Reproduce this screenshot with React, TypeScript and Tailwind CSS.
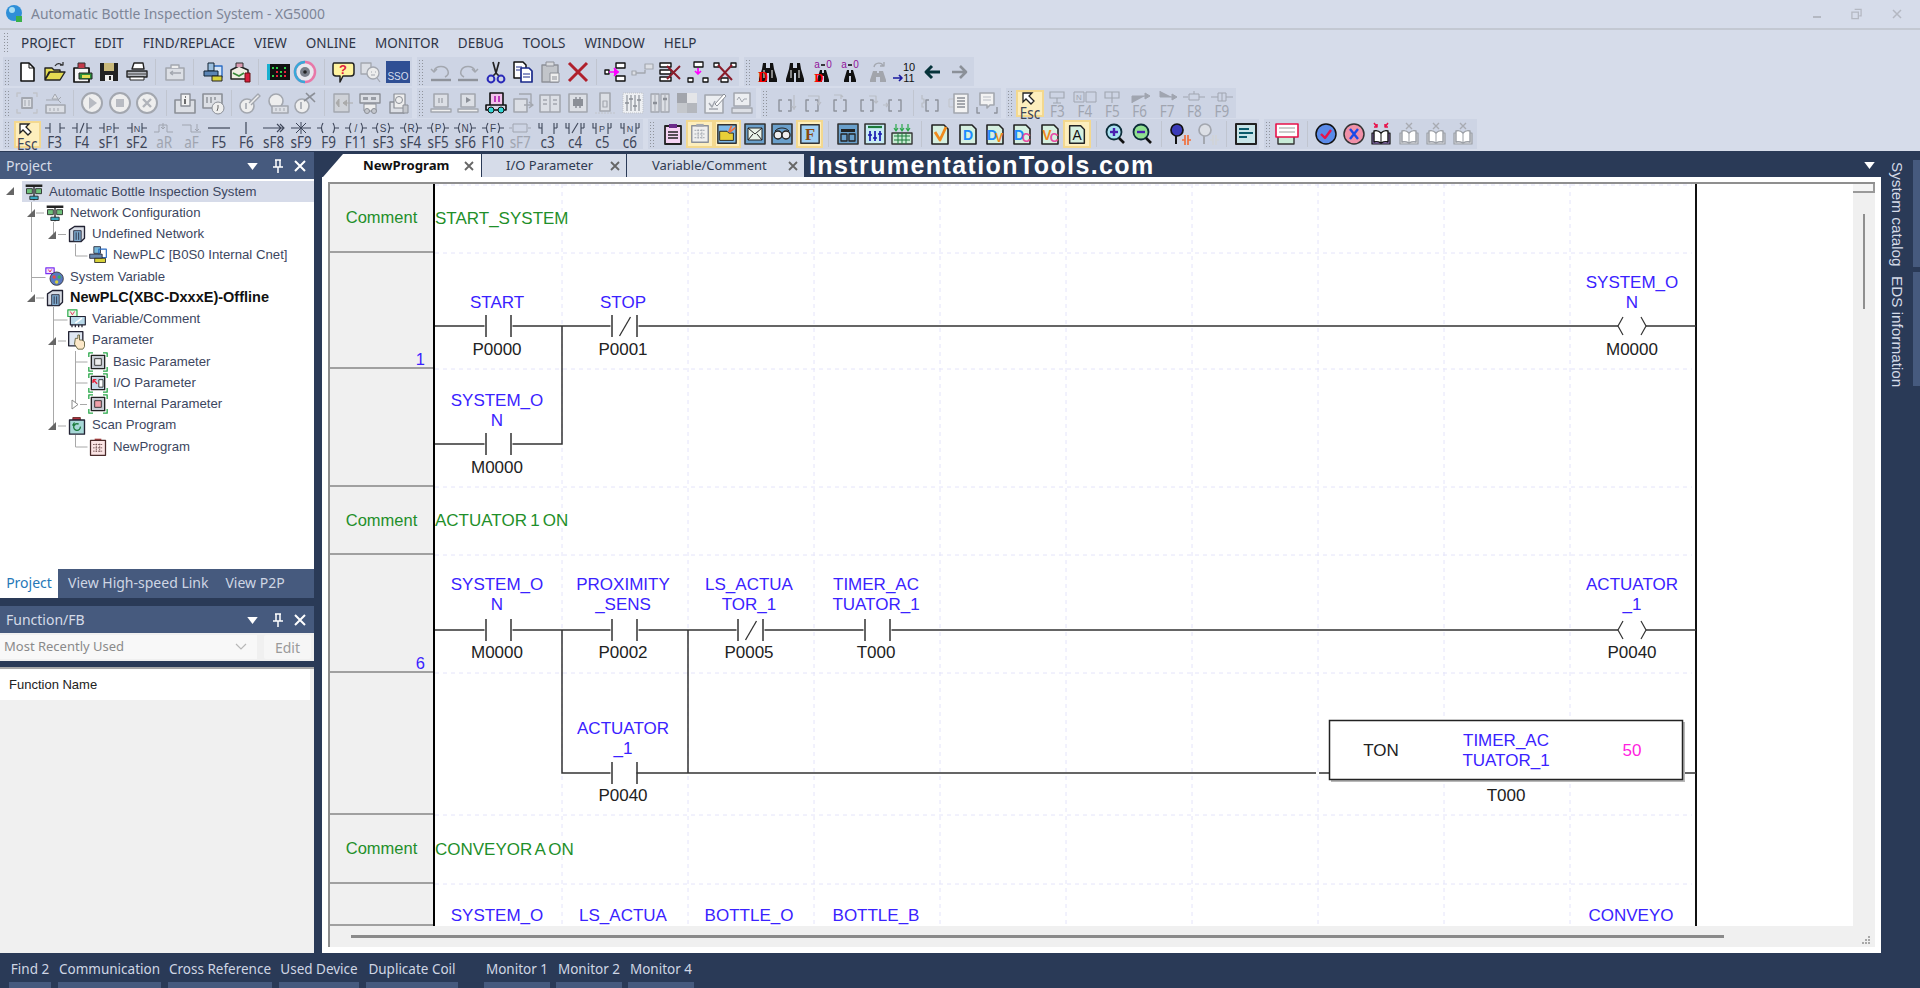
import type { ReactNode } from "react";

const DS = "#a3a7af"; // disabled stroke
const DF = "#dcdfe5"; // disabled fill

function S({ children, className = "w-[24px] h-[24px]" }: { children: ReactNode; className?: string }) {
  return (
    <svg viewBox="0 0 24 24" className={`${className} overflow-visible`} fill="none" strokeLinejoin="round">
      {children}
    </svg>
  );
}

function Doc({ a, b, c1 = "#1a8cff", c2 = "#f08a1c" }: { a: string; b?: string; c1?: string; c2?: string }) {
  return (
    <>
      <path d="M4 3h12l4 4v15H4z" fill="#d6f0e0" stroke="#222" strokeWidth="1.6" />
      <text x={b ? 9 : 12} y="18" fontSize="14" fontWeight="700" textAnchor="middle" fill={c1} fontFamily="Liberation Sans">{a}</text>
      {b && <text x="16" y="20" fontSize="12" fontWeight="700" textAnchor="middle" fill={c2} fontFamily="Liberation Sans">{b}</text>}
    </>
  );
}

function Book({ on = false }: { on?: boolean }) {
  const s = on ? "#111" : "#9b9fa6";
  return (
    <>
      <path d="M3 11h18v11H3z" fill={on ? "#a884d8" : "#d8dade"} stroke={s} strokeWidth="1.2" />
      <path d="M5 9c3-1 5 0 7 2 2-2 4-3 7-2v11c-3-1-5 0-7 1-2-1-4-2-7-1z" fill="#fff" stroke={s} strokeWidth="1.4" />
      <path d="M12 11v9" stroke={s} />
      {on ? (
        <path d="M5 1l3 4M8 2v3H5M19 1l-3 4M16 2v3h3" stroke="#e8124a" strokeWidth="1.5" />
      ) : (
        <path d="M9 1l6 6M15 1L9 7" stroke="#a8abb2" strokeWidth="1.4" />
      )}
    </>
  );
}

function Mag({ c, plus }: { c: string; plus?: boolean }) {
  return (
    <>
      <circle cx="11" cy="10" r="7.5" fill={c} stroke="#0d2d3a" strokeWidth="1.8" />
      <path d="M7 10h8" stroke="#4a1fb0" strokeWidth="2.4" />
      {plus && <path d="M11 6v8" stroke="#4a1fb0" strokeWidth="2.4" />}
      <path d="M16 16l5 5" stroke="#111" strokeWidth="2.6" />
    </>
  );
}

function Bino({ d }: { d?: boolean }) {
  return (
    <>
      <path d="M7 3h3v5h4V3h3l1 6 3 10v3h-8v-9h-2v9H3v-3l3-10z" fill="#111" />
      <path d="M8 10v8M16 10v8" stroke="#fff" strokeWidth="1" />
      {d && <text x="7" y="22" fontSize="14" fontWeight="900" textAnchor="middle" fill="#f00" fontFamily="Liberation Serif">D</text>}
    </>
  );
}

function SmallBino({ d }: { d?: boolean }) {
  return (
    <>
      <path d="M9 10h2v3h2v-3h2l3 10v2h-5v-6h-2v6H6v-2z" fill="#111" />
      <text x="6" y="8" fontSize="10" textAnchor="middle" fill="#90129a" fontFamily="Liberation Sans">a</text>
      <path d="M10 5h4" stroke="#111" strokeWidth="1.6" />
      <text x="18" y="8" fontSize="10" textAnchor="middle" fill="#90129a" fontFamily="Liberation Sans">0</text>
      {d && <text x="8" y="22" fontSize="13" fontWeight="900" textAnchor="middle" fill="#f00" fontFamily="Liberation Serif">D</text>}
    </>
  );
}

function Bracket({ d }: { d: string }) {
  return (
    <>
      <path d="M9 9H6v11h3M15 9h3v11h-3" stroke="#8e939c" strokeWidth="1.4" />
      <path d={d} stroke="#b9bdc5" strokeWidth="1.2" />
    </>
  );
}

const icons: Record<string, ReactNode> = {
  new: <><path d="M6 3h8l5 5v13H6z" fill="#fff" stroke="#111" strokeWidth="1.6" /><path d="M14 3v5h5" stroke="#111" /></>,
  open: <><path d="M2 20V8h7l2 2h6v2H7l-5 8 4-8h16l-5 8z" fill="#e4dc52" stroke="#222" strokeWidth="1.4" /><path d="M12 6c2-3 5-3 7-1M20 2v3h-3" stroke="#333" strokeWidth="1.3" /></>,
  openPlc: <><path d="M4 8h15v14H4z" fill="#f6f6f6" stroke="#111" strokeWidth="1.7" /><path d="M8 8V3h7v5" fill="#c23a4a" stroke="#333" /><path d="M9 13h13v6H9z" fill="#2f8f3a" stroke="#222" /><path d="M12 15h8v3h-8z" fill="#e4dc52" /></>,
  save: <><path d="M3 3h18v18H3z" fill="#222" /><path d="M7 3h10v8H7z" fill="#c9b97a" /><path d="M8 15h8v6H8z" fill="#eee" /><path d="M12 16h2v4h-2z" fill="#222" /></>,
  print: <><path d="M7 9l2-6h9l1 6z" fill="#fff" stroke="#222" strokeWidth="1.4" /><path d="M2 11h20v6H2z" fill="#b5b8bf" stroke="#222" strokeWidth="1.4" /><path d="M5 17h14v3H5z" fill="#fff" stroke="#222" /><path d="M3 14h18" stroke="#444" /></>,
  clip: <><path d="M3 8h18v12H3z" fill={DF} stroke={DS} strokeWidth="1.6" /><path d="M8 8V5h8v3" stroke={DS} strokeWidth="1.4" fill="#eee" /><path d="M7 13h11M7 13l3-2M7 13l3 2" stroke={DS} strokeWidth="1.4" /></>,
  plc: <><path d="M12 6h9v11h-9z" fill="#d6e6f8" stroke="#2b6cc4" strokeWidth="1.4" /><path d="M7 3h6v8H7z" fill="#9cc0e0" stroke="#123" /><path d="M3 11h14v5H3z" fill="#5b85b5" stroke="#123" /><path d="M11 16h10v5H11z" fill="#d8d23a" stroke="#222" /></>,
  plcChk: <><path d="M3 10l8-4 9 4v9H3z" fill="#f0eee4" stroke="#222" strokeWidth="1.5" /><path d="M8 7V3h7v4" fill="#d99ab0" stroke="#333" /><path d="M5 13l6 3 5-3" stroke="#3a8a3a" strokeWidth="1.8" /><path d="M17 13h5v9h-5z" fill="#d81c3c" stroke="#611" /></>,
  led: <><path d="M1 4h23v16H1z" fill="#111" /><path d="M1 4h3v16H1z" fill="#18b0d0" /><path d="M6 7h2v2H6zM10 7h2v2h-2zM14 11h2v2h-2zM18 7h2v2h-2zM6 15h2v2H6zM14 15h2v2h-2z" fill="#2fd04a" /><path d="M10 11h2v2h-2zM18 11h2v2h-2zM10 15h2v2h-2zM18 15h2v2h-2z" fill="#e8243c" /></>,
  ring: <><circle cx="12" cy="12" r="10" fill="#e8e8ee" stroke="#e878a8" strokeWidth="2.5" /><path d="M12 2a10 10 0 0 0 0 20" stroke="#38a8d8" strokeWidth="2.5" /><circle cx="12" cy="12" r="5" fill="#7a7f8a" /><circle cx="12" cy="12" r="1.8" fill="#222" /></>,
  help: <><path d="M3 3h18q2 0 2 3v7q0 3-3 3h-8l-3 6v-6H5q-3 0-3-3V6q0-3 1-3z" fill="#fff3a0" stroke="#222" strokeWidth="1.5" /><text x="12" y="14" fontSize="13" fontWeight="700" textAnchor="middle" fill="#e0203c" fontFamily="Liberation Sans">?</text></>,
  faces: <><path d="M3 3h10v11H3z" fill={DF} stroke={DS} strokeWidth="1.3" /><circle cx="15" cy="13" r="6" fill="#ededed" stroke={DS} strokeWidth="1.3" /><path d="M13 12h1M17 12h1M13 15h4M19 18l3 4" stroke={DS} strokeWidth="1.2" /></>,
  sso: <><path d="M0 1h24v22H0z" fill="#2f4f94" /><text x="12" y="20" fontSize="10" textAnchor="middle" fill="#d4dcec" fontFamily="Liberation Sans">SSO</text></>,
  undo: <><path d="M5 11c2-6 12-6 14 0 1 3-1 5-3 6" stroke={DS} strokeWidth="1.5" /><path d="M2 9l3 3 3-3" stroke={DS} strokeWidth="1.5" /><path d="M2 20h20" stroke="#8f939b" strokeWidth="2.4" /></>,
  redo: <><path d="M19 11C17 5 7 5 5 11c-1 3 1 5 3 6" stroke={DS} strokeWidth="1.5" /><path d="M16 9l3 3 3-3" stroke={DS} strokeWidth="1.5" /><path d="M2 20h20" stroke="#8f939b" strokeWidth="2.4" /></>,
  cut: <><path d="M9 2l3 11 3-11M12 13l-3 3M12 13l3 3" stroke="#222" strokeWidth="1.7" /><circle cx="7" cy="19" r="3.4" stroke="#2a2ab8" strokeWidth="2" /><circle cx="17" cy="19" r="3.4" stroke="#2a2ab8" strokeWidth="2" /></>,
  copy: <><path d="M3 2h9l3 3v13H3z" fill="#fff" stroke="#111" strokeWidth="1.5" /><path d="M10 8h8l3 3v11H10z" fill="#fff" stroke="#1a2a8a" strokeWidth="1.7" /><path d="M12 14h7M12 17h7M5 7h6M5 10h4" stroke="#1a2a8a" /></>,
  paste: <><path d="M4 5h16v17H4z" fill="#c2c5ca" stroke="#8d9098" strokeWidth="1.4" /><path d="M8 6V2h8v4z" fill="#d8dade" stroke="#8d9098" /><path d="M12 13h9v9h-9z" fill="#eee" stroke="#8d9098" /><path d="M14 17h5M14 19h5" stroke="#8d9098" /></>,
  del: <path d="M3 3l18 18M21 3L3 21" stroke="#b0202c" strokeWidth="3" />,
  net1: <><path d="M1 10h4v4H1zM12 3h9v5h-9zM12 16h9v5h-9z" fill="#fff" stroke="#111" strokeWidth="1.4" /><path d="M5 12h10M10 8l4 4-4 4" fill="#f0f" stroke="#f0f" strokeWidth="1.6" /></>,
  net2: <><path d="M1 11h4v4H1zM14 4h8v5h-8z" fill={DF} stroke={DS} strokeWidth="1.2" /><path d="M5 13h9v-3" stroke={DS} strokeWidth="1.4" /></>,
  net3: <><path d="M2 3h11v4H2zM2 10h11v4H2zM2 17h11v4H2z" fill="#fff" stroke="#111" strokeWidth="1.4" /><path d="M9 6l13 13M22 6L9 19" stroke="#8a1c2a" strokeWidth="2" /></>,
  net4: <><path d="M8 2h9v5H8zM2 18h5v4H2zM17 18h5v4h-5z" fill="#fff" stroke="#111" strokeWidth="1.3" /><path d="M12 8v6M9 11l3 3 3-3" stroke="#f0f" strokeWidth="1.7" /></>,
  net5: <><path d="M1 3h5v4H1zM18 3h5v4h-5zM8 18h7v4H8z" fill="#fff" stroke="#111" strokeWidth="1.3" /><path d="M5 5l14 15M19 5L5 20" stroke="#8a1c2a" strokeWidth="2" /></>,
  findD1: <Bino d />,
  find1: <Bino />,
  findD2: <SmallBino d />,
  find2: <SmallBino />,
  findG: <><path d="M7 11h4v2h2v-2h4l3 9v2h-6v-5h-4v5H4v-2z" fill="#a2a5ac" /><path d="M8 7c1-5 8-5 9-1M18 2v4h-4" stroke={DS} strokeWidth="1.4" /></>,
  num: <><text x="16" y="11" fontSize="11" textAnchor="middle" fill="#111" fontFamily="Liberation Sans">10</text><text x="16" y="22" fontSize="11" textAnchor="middle" fill="#111" fontFamily="Liberation Sans">11</text><path d="M0 18h9M6 15l3 3-3 3" stroke="#1a1aa0" strokeWidth="1.7" /></>,
  back: <path d="M20 12H6M12 6l-6 6 6 6" stroke="#06333a" strokeWidth="3" />,
  fwd: <path d="M4 12h14M12 6l6 6-6 6" stroke="#8b9098" strokeWidth="2.6" />,
  // row 2
  exp: <><path d="M7 7h10v10H7z" fill={DF} stroke={DS} strokeWidth="1.8" /><path d="M10 9v6M14 9v6" stroke={DS} /><path d="M2 6V2h4M22 6V2h-4M2 18v4h4M22 18v4h-4" stroke="#c1c4ca" strokeWidth="1.4" /></>,
  dl: <><path d="M9 8l3-5 3 5z" fill={DF} stroke={DS} /><path d="M3 9h12M15 9l3-3M15 9l3 3" stroke={DS} /><path d="M3 14h19v8H3z" fill={DF} stroke={DS} strokeWidth="1.6" /><path d="M7 17v3M11 17v3M15 17v3" stroke={DS} /></>,
  play: <><circle cx="12" cy="12" r="10" fill="#eee" stroke={DS} strokeWidth="2" /><path d="M9 6l8 6-8 6z" fill="#b8bbc2" /></>,
  stop: <><circle cx="12" cy="12" r="10" fill="#eee" stroke={DS} strokeWidth="2" /><path d="M8 8h8v8H8z" fill="#b8bbc2" /></>,
  xc: <><circle cx="12" cy="12" r="10" fill="#eee" stroke={DS} strokeWidth="2" /><path d="M8 8l8 8M16 8l-8 8" stroke="#b0b3ba" strokeWidth="2.4" /></>,
  info: <><path d="M2 9h20v13H2z" fill={DF} stroke="#8b8f97" strokeWidth="1.6" /><path d="M8 3h9v12H8z" fill="#f2f2f2" stroke="#8b8f97" strokeWidth="1.4" /><path d="M12 6h1M12 8v5" stroke="#555" strokeWidth="1.7" /></>,
  clock: <><path d="M2 3h19v14H2z" fill={DF} stroke="#8b8f97" strokeWidth="1.6" /><path d="M6 6v6M10 6v6M14 6v3" stroke="#8b8f97" strokeWidth="1.4" /><circle cx="17" cy="17" r="6" fill="#eee" stroke="#8b8f97" /><path d="M17 14v3l-1 3" stroke="#666" /></>,
  wr1: <><circle cx="9" cy="15" r="7" fill="#eee" stroke={DS} strokeWidth="1.6" /><path d="M11 12L20 3l2 2-9 9" fill="#eee" stroke={DS} strokeWidth="1.4" /><path d="M8 12v6" stroke={DS} strokeWidth="1.6" /></>,
  wr2: <><circle cx="10" cy="10" r="7" fill="#eee" stroke={DS} strokeWidth="1.6" /><path d="M6 15h16v7H6z" fill={DF} stroke={DS} strokeWidth="1.6" /><path d="M10 17v3M14 17v3M18 17v3" stroke={DS} /></>,
  wr3: <><circle cx="9" cy="15" r="7" fill="#eee" stroke={DS} strokeWidth="1.6" /><path d="M8 11v7" stroke={DS} strokeWidth="1.6" /><path d="M11 10L22 2M13 2l9 9" stroke="#8b8f97" strokeWidth="1.6" /></>,
  g1: <><path d="M3 3h15v18H3z" fill="#cfd2d8" stroke={DS} strokeWidth="1.4" /><path d="M8 8l-3 4 3 4zM12 12h10M16 9l-4 3 4 3" fill="#aaa" stroke="#aaa" /></>,
  g2: <><path d="M2 3h20v9H2z" fill={DF} stroke="#8b8f97" strokeWidth="1.4" /><path d="M5 6h5v3H5zM13 6h5v3h-5z" fill="#9a9ea6" /><path d="M6 13h12v7H6z" fill="#eee" stroke="#8b8f97" /><circle cx="9" cy="20" r="2.5" fill="#c4c7cd" stroke="#8b8f97" /><circle cx="16" cy="20" r="2.5" fill="#c4c7cd" stroke="#8b8f97" /></>,
  g3: <><path d="M4 11h14v11H4z" fill={DF} stroke="#8b8f97" strokeWidth="1.4" /><path d="M8 3h11v14H8z" fill="#eee" stroke="#8b8f97" strokeWidth="1.2" /><circle cx="13" cy="9" r="3.5" stroke="#8b8f97" /><path d="M17 14h5v8h-5z" fill="#c4c7cd" stroke="#8b8f97" /></>,
  pc1: <><path d="M5 3h14v13H5z" fill={DF} stroke={DS} strokeWidth="1.6" /><path d="M10 7v5M13 7v5" stroke="#8b8f97" /><path d="M2 18h20v3H2z" fill="#eee" stroke={DS} strokeWidth="1.4" /></>,
  pc2: <><path d="M5 3h14v13H5z" fill={DF} stroke={DS} strokeWidth="1.6" /><path d="M10 6l5 3-5 3z" fill="#8b8f97" /><path d="M2 18h20v3H2z" fill="#eee" stroke={DS} strokeWidth="1.4" /></>,
  car: <><path d="M6 2h13v13H6z" fill="#f3c4ec" stroke="#111" strokeWidth="1.6" /><path d="M11 5v6M15 5v6" stroke="#b01ab0" strokeWidth="1.6" /><path d="M2 14h20v5H2z" fill="#d7d7e6" stroke="#111" strokeWidth="1.6" /><circle cx="7" cy="19" r="3" fill="#38d8d8" stroke="#111" /><circle cx="17" cy="19" r="3" fill="#38d8d8" stroke="#111" /></>,
  sw: <><path d="M3 8h13v13H3z" fill={DF} stroke={DS} strokeWidth="1.6" /><path d="M8 3h12v9" stroke={DS} strokeWidth="1.4" /><path d="M13 14h8M18 11l4 3-4 3" stroke={DS} strokeWidth="1.4" /></>,
  panel: <><path d="M2 4h20v17H2z" fill={DF} stroke={DS} strokeWidth="1.6" /><path d="M12 4v17M5 9h4M5 13h4M15 9h4M15 13h4" stroke={DS} strokeWidth="1.3" /></>,
  mod: <><path d="M3 3h18v18H3z" fill={DF} stroke={DS} strokeWidth="1.6" /><path d="M7 8h10v7H7z" fill="#8b8f97" /><path d="M10 6v2M14 6v2M10 15v2M14 15v2" stroke="#8b8f97" strokeWidth="1.5" /></>,
  slot: <><path d="M7 2h10v18H7z" fill={DF} stroke={DS} strokeWidth="1.6" /><path d="M10 10h4v6h-4z" stroke={DS} strokeWidth="1.2" /><path d="M2 22h20" stroke="#c1c4ca" strokeDasharray="2 1" /></>,
  comb: <><path d="M2 2h20v20H2z" fill="#eef0f3" stroke="#bfc2c8" strokeDasharray="1 1" /><path d="M6 4v16M10 4v16M14 4v16M18 4v16" stroke="#a3a7af" strokeWidth="1.5" /><path d="M4 12h4M8 8h4M12 15h4M16 9h4" stroke="#8b8f97" strokeWidth="1.6" /></>,
  comb2: <><path d="M3 3h8v18H3zM13 3h8v18h-8z" fill={DF} stroke={DS} strokeWidth="1.3" /><path d="M7 4v16M17 4v16" stroke={DS} /><path d="M5 12h4M15 8h4" stroke="#8b8f97" strokeWidth="2.4" /></>,
  tile: <><path d="M2 2h10v10H2z" fill="#a2a5ac" /><path d="M12 2h10v10H12z" fill="#e4e5e8" /><path d="M2 12h10v10H2z" fill="#c4c7cc" /><path d="M12 12h10v10H12z" fill="#b4b7bd" /></>,
  note: <><path d="M2 4h18v18H2z" fill="#eceef1" stroke={DS} strokeWidth="1.6" /><path d="M6 12l3 4 3-6M6 18h9" stroke={DS} strokeWidth="1.5" /><path d="M12 13l9-10 2 2-9 10z" fill="#fff" stroke="#8b8f97" /></>,
  pc3: <><path d="M4 2h16v13H4z" fill="#eceef1" stroke={DS} strokeWidth="1.5" /><path d="M7 9l2-3 3 5 2-3h3" stroke={DS} /><path d="M2 17h20v5H2z" fill={DF} stroke={DS} strokeWidth="1.4" /></>,
  br1: <Bracket d="M21 4v15M19 15l2 3 2-3" />,
  br2: <Bracket d="M8 5h11v9M17 11l2 3 2-3" />,
  br3: <Bracket d="M6 4h7v4M13 4l2 2" />,
  br4: <Bracket d="M14 5h7v7M19 10l2 2 2-2" />,
  br5: <Bracket d="M0 14h5M3 12l2 2-2 2" />,
  br6: <Bracket d="M2 4v4h2v4H2v4h2" />,
  lst: <><path d="M1 8h5v8H1z" stroke="#c1c4ca" /><path d="M6 3h14v19H6z" fill="#f3f3f3" stroke={DS} strokeWidth="1.6" /><path d="M9 7h8M9 10h8M9 13h8M9 16h8" stroke="#8b8f97" strokeWidth="1.4" /></>,
  cmt: <><path d="M5 2h14v12h-4l-3 3v-3H5z" fill="#f3f3f3" stroke={DS} strokeWidth="1.6" /><path d="M8 6h8M8 9h8" stroke="#b9bdc5" /><path d="M2 16v6h3M22 16v6h-3" stroke="#8e939c" strokeWidth="1.4" /></>,
  // row 3
  cb: <><path d="M4 4h16v18H4z" fill="#f6d4f4" stroke="#222" strokeWidth="1.8" /><path d="M8 2h8v4H8z" fill="#6a2a8a" /><path d="M7 10h10M7 13h10M7 16h10" stroke="#222" strokeWidth="1.3" /></>,
  tb: <><path d="M3 3h18v18H3z" fill="#eee" stroke="#8b8f97" strokeWidth="1.5" /><path d="M8 1h8v3H8z" fill="#a3a7af" /><path d="M6 8h12M6 12h12M6 16h12M10 7v10M14 7v10" stroke="#9ea3ac" strokeDasharray="2 1" /></>,
  fo: <><path d="M2 2h20v20H2z" fill="#7db8e8" stroke="#333" strokeWidth="1.6" /><path d="M4 9h8l2 2h5v8H4z" fill="#e8cf38" stroke="#222" /><path d="M17 3l-3 7M21 5l-6 5" stroke="#f0703c" strokeWidth="2" /></>,
  ma: <><path d="M2 2h20v20H2z" fill="#6aa0cc" stroke="#333" strokeWidth="1.6" /><path d="M5 6h14v12H5z" fill="#eaf4ea" stroke="#222" /><path d="M5 6l7 6 7-6M5 18l5-6M19 18l-5-6" stroke="#222" /></>,
  gl: <><path d="M2 2h20v20H2z" fill="#6aa0cc" stroke="#333" strokeWidth="1.6" /><circle cx="8" cy="13" r="4" fill="#eee" stroke="#222" strokeWidth="1.4" /><circle cx="16" cy="13" r="4" fill="#eee" stroke="#222" strokeWidth="1.4" /><path d="M5 9c3-4 11-4 14 0" stroke="#222" /></>,
  ff: <><path d="M2 2h20v20H2z" fill="#a0d0f4" stroke="#333" strokeWidth="1.6" /><text x="12" y="19" fontSize="18" fontWeight="700" textAnchor="middle" fill="#8a4a0c" fontFamily="Liberation Serif">F</text></>,
  bl1: <><path d="M2 2h20v20H2z" fill="#6aa0cc" stroke="#333" strokeWidth="1.6" /><path d="M5 7h14v3H5z" fill="#222" /><path d="M5 12h6v7H5zM13 12h6v7h-6z" stroke="#222" strokeWidth="1.3" /></>,
  bl2: <><path d="M2 2h20v20H2z" fill="#c8ecf4" stroke="#333" strokeWidth="1.6" /><path d="M5 5h14" stroke="#1c7a3a" strokeWidth="2.2" /><path d="M7 9v10M12 9v10M17 9v10M5 13h4M10 16h4M15 12h4" stroke="#1a1ab0" strokeWidth="1.7" /></>,
  bl3: <><path d="M2 11h20v11H2z" fill="#c8ecd4" stroke="#333" strokeWidth="1.4" /><path d="M4 14h16M4 18h16M8 11v11M12 11v11M16 11v11" stroke="#1c7a3a" /><path d="M6 2v7M12 2v7M18 2v7M4 6l2 3 2-3M10 6l2 3 2-3M16 6l2 3 2-3" stroke="#2aa84a" strokeWidth="1.2" /></>,
  dv: <><path d="M4 3h12l4 4v15H4z" fill="#d6f0e0" stroke="#222" strokeWidth="1.6" /><path d="M7 10l5 8 6-13" stroke="#f08a1c" strokeWidth="2.8" /></>,
  d: <Doc a="D" />,
  dvv: <Doc a="D" b="V" />,
  dc: <Doc a="D" b="C" c2="#e84ca8" />,
  vc: <Doc a="V" b="C" c1="#f08a1c" c2="#e84ca8" />,
  aa: <><path d="M4 3h12l4 4v15H4z" fill="#d6f0e0" stroke="#222" strokeWidth="1.6" /><text x="12" y="18" fontSize="15" textAnchor="middle" fill="#111" fontFamily="Liberation Sans">A</text></>,
  zin: <Mag c="#a8e0f0" plus />,
  zout: <Mag c="#90e090" />,
  fr1: <><circle cx="9" cy="8" r="6" fill="#3a3ab8" stroke="#111" strokeWidth="1.7" /><path d="M8 14v8" stroke="#111" strokeWidth="2" /><path d="M14 18h3M20 18h3M17 13v10M20 13v10" stroke="#f0703c" strokeWidth="1.7" /></>,
  fr2: <><circle cx="9" cy="8" r="6" fill="#dcdfe5" stroke={DS} strokeWidth="1.7" /><path d="M8 14v8" stroke={DS} strokeWidth="2" /><path d="M14 18h3M20 18h3M17 13v10M20 13v10" stroke="#d0d3d8" strokeWidth="1.7" /></>,
  lt: <><path d="M2 2h20v20H2z" fill="#c8e4e8" stroke="#222" strokeWidth="2" /><path d="M5 7h10M5 11h14M5 15h8" stroke="#0a5a6a" strokeWidth="1.8" /></>,
  sp: <><path d="M2 11h16v11H2z" fill="#c8ecd8" stroke="#333" strokeWidth="1.4" /><path d="M0 2h22v13H0z" fill="#fff" stroke="#e8124a" strokeWidth="1.6" /><path d="M3 6h16M3 10h16" stroke="#999" /></>,
  chk: <><circle cx="12" cy="12" r="10" fill="#5a8ae8" stroke="#111" strokeWidth="1.5" /><path d="M7 12l4 4 6-8" stroke="#e8124a" strokeWidth="2.4" /></>,
  xp: <><circle cx="12" cy="12" r="10" fill="#f090a8" stroke="#333" strokeWidth="1.5" /><path d="M8 7l8 10M16 7L8 17" stroke="#1a4ae8" strokeWidth="2.4" /></>,
  bk1: <Book on />,
  bk2: <Book />,
};

type Item = string | null;

function Icon({ n }: { n: string }) {
  return (
    <div className="w-[27.4px] h-[28px] flex items-center justify-center shrink-0">
      <S>{icons[n]}</S>
    </div>
  );
}

function ActiveIcon({ n }: { n: string }) {
  return (
    <div className="w-[27.4px] h-[28px] flex items-center justify-center shrink-0 bg-[#fdeebd] border-2 border-[#f3d88f]">
      <S className="w-[22px] h-[22px]">{icons[n]}</S>
    </div>
  );
}

function Gripper() {
  return <div className="w-[6px] h-[26px] ml-[1px] mr-[3.5px] shrink-0 bg-[radial-gradient(#8f939b_1px,transparent_1px)] bg-[length:3px_3px]" />;
}

function Sep() {
  return (
    <div className="w-[10.5px] h-[26px] shrink-0 flex justify-center">
      <div className="w-px h-full bg-[#c0c5d0]" />
    </div>
  );
}

const ACTIVE = new Set(["tb", "fo", "ff", "aa"]);

function Group({ items, grip = true, className = "" }: { items: Item[]; grip?: boolean; className?: string }) {
  return (
    <div className={`flex items-center h-full bg-[#cdd4e4] ${className}`}>
      {grip && <Gripper />}
      {items.map((it, i) =>
        it === null ? <Sep key={i} /> : ACTIVE.has(it) ? <ActiveIcon key={i} n={it} /> : <Icon key={i} n={it} />
      )}
    </div>
  );
}

// ---- labelled instruction buttons ----

function Paren({ t }: { t?: string }) {
  return (
    <>
      <path d="M1 6h4M23 6h-4M7 1Q4 6 7 11M17 1q3 5 0 10" stroke="currentColor" strokeWidth="1.1" />
      {t && <text x="12" y="10" fontSize="10" textAnchor="middle" fill="currentColor" fontFamily="Liberation Sans">{t}</text>}
    </>
  );
}

function Bars({ t, slash }: { t?: string; slash?: boolean }) {
  return (
    <>
      <path d="M2 6h5M7 1v10M17 1v10M17 6h5" stroke="currentColor" strokeWidth="1.1" />
      {slash && <path d="M10 11l4-10" stroke="currentColor" strokeWidth="1.1" />}
      {t && <text x="12" y="10" fontSize="9" textAnchor="middle" fill="currentColor" fontFamily="Liberation Sans">{t}</text>}
    </>
  );
}

function CBars({ t, slash }: { t?: string; slash?: boolean }) {
  return (
    <>
      <path d="M3 1v5h3M6 1v11M18 1v11M18 6h3M21 1v5" stroke="currentColor" strokeWidth="1.1" />
      {slash && <path d="M9 11l6-10" stroke="currentColor" strokeWidth="1.1" />}
      {t && <text x="12" y="10" fontSize="9" textAnchor="middle" fill="currentColor" fontFamily="Liberation Sans">{t}</text>}
    </>
  );
}

const glyphs: Record<string, ReactNode> = {
  cursor: <path d="M5 0v9l3-3 5 5 3-3-5-5 3-3z" fill="#fff" stroke="#222" strokeWidth="1.3" />,
  no: <Bars />,
  nc: <Bars slash />,
  p: <Bars t="P" />,
  n: <Bars t="N" />,
  rise: <path d="M2 10h5V3h8v7h6M11 1v6M9 5l2 2 2-2" stroke="currentColor" strokeWidth="1" />,
  fall: <path d="M2 3h9v7h10M7 3v0M17 2v7M15 7l2 2 2-2" stroke="currentColor" strokeWidth="1" />,
  h: <path d="M1 6h22" stroke="currentColor" strokeWidth="1.2" />,
  v: <path d="M12 0v12" stroke="currentColor" strokeWidth="1.2" />,
  arrow: <path d="M1 6h20M15 2l4 4-4 4M18 2l4 4-4 4" stroke="currentColor" strokeWidth="1.1" />,
  star: <path d="M2 6h20M12 0v12M7 1l10 10M17 1L7 11" stroke="currentColor" strokeWidth="1" />,
  coil: <Paren />,
  coilNc: <Paren t="/" />,
  S: <Paren t="S" />,
  R: <Paren t="R" />,
  P: <Paren t="P" />,
  N: <Paren t="N" />,
  F: <Paren t="F" />,
  box: <path d="M1 6h3M5 2h14v8H5zM20 6h3" stroke="currentColor" strokeWidth="1" />,
  c3: <CBars />,
  c4: <CBars slash />,
  c5: <CBars t="P" />,
  c6: <CBars t="N" />,
  f3: <path d="M5 1h14v6H5zM12 7v5M8 12h8" stroke="currentColor" strokeWidth="1.1" />,
  f4: <><path d="M1 1h10v10H1zM13 1h10v10H13z" stroke="currentColor" strokeWidth="1" /><text x="6" y="9" fontSize="8" textAnchor="middle" fill="currentColor" fontFamily="Liberation Sans">N</text></>,
  f5: <path d="M5 1h14v6H5zM12 1v6M12 7v5" stroke="currentColor" strokeWidth="1.1" />,
  f6: <path d="M4 12V5h13M17 2l5 3-5 3z" fill="currentColor" stroke="currentColor" strokeWidth="1" />,
  f7: <path d="M5 0v6h12M17 3l5 3-5 3z" fill="currentColor" stroke="currentColor" strokeWidth="1" />,
  f8: <path d="M1 6h5M7 3h10v6H7zM17 6h6M12 0v3" stroke="currentColor" strokeWidth="1" />,
  f9: <path d="M1 6h7M8 2h8v8H8zM16 6h7M12 2v8" stroke="currentColor" strokeWidth="1" />,
};

function L({ g, t, off, active }: { g: string; t: string; off?: boolean; active?: boolean }) {
  const tone = off ? "text-[#a0a5b0]" : "text-[#3d4558]";
  return (
    <div
      className={`w-[27.4px] h-[27px] flex flex-col items-center justify-start shrink-0 ${tone} ${
        active ? "bg-[#fdeebd] border-2 border-[#f3d88f]" : ""
      }`}
    >
      <svg viewBox="0 0 24 12" className="w-[24px] h-[12px] mt-[1px] shrink-0 overflow-visible" fill="none">
        {glyphs[g]}
      </svg>
      <span className="text-[13.5px] leading-[12px] mt-[1px] whitespace-nowrap scale-y-[1.2] origin-top">{t}</span>
    </div>
  );
}

const row3: [string, string, boolean?][] = [
  ["no", "F3"], ["nc", "F4"], ["p", "sF1"], ["n", "sF2"], ["rise", "aR", true], ["fall", "aF", true], ["h", "F5"], ["v", "F6"],
  ["arrow", "sF8"], ["star", "sF9"], ["coil", "F9"], ["coilNc", "F11"], ["S", "sF3"], ["R", "sF4"], ["P", "sF5"], ["N", "sF6"],
  ["F", "F10"], ["box", "sF7", true], ["c3", "c3"], ["c4", "c4"], ["c5", "c5"], ["c6", "c6"],
];

function Toolbars() {
  return (
    <div className="flex flex-col">
      <div className="flex h-[29px] mt-px pl-[3px] gap-[5px]">
        <Group items={["new", "open", "openPlc", "save", "print", null, "clip", null, "plc", "plcChk", null, "led", "ring", null, "help", "faces", "sso"]} />
        <Group items={["undo", "redo", "cut", "copy", "paste", "del", null, "net1", "net2", "net3", "net4", "net5"]} />
        <Group items={["findD1", "find1", "findD2", "find2", "findG", "num", "back", "fwd"]} />
      </div>
      <div className="flex h-[30px] mt-[2px] pl-[3px] gap-[5px]">
        <Group items={["exp", "dl", null, "play", "stop", "xc", null, "info", "clock", null, "wr1", "wr2", "wr3", null, "g1", "g2", "g3"]} />
        <Group items={["pc1", "pc2", "car", "sw", "panel", "mod", "slot", "comb", "comb2", "tile", "note", "pc3"]} />
        <Group items={["br1", "br2", "br3", "br4", "br5", null, "br6", "lst", "cmt"]} />
        <div className="flex items-center h-full bg-[#cdd4e4]">
          <Gripper />
          <L g="cursor" t="Esc" active />
          {[["f3", "F3"], ["f4", "F4"], ["f5", "F5"], ["f6", "F6"], ["f7", "F7"], ["f8", "F8"], ["f9", "F9"]].map(([g, t]) => (
            <L key={t} g={g} t={t} off />
          ))}
        </div>
      </div>
      <div className="flex h-[30px] mt-px pl-[3px] gap-[5px]">
        <div className="flex items-center h-full bg-[#cdd4e4]">
          <Gripper />
          <L g="cursor" t="Esc" active />
          {row3.map(([g, t, off]) => (
            <L key={t} g={g} t={t} off={off} />
          ))}
        </div>
        <Group items={["cb", "tb", "fo", "ma", "gl", "ff", null, "bl1", "bl2", "bl3", null, "dv", "d", "dvv", "dc", "vc", "aa", null, "zin", "zout", null, "fr1", "fr2", null, "lt"]} />
        <Group items={["sp", null, "chk", "xp", "bk1", "bk2", "bk2", "bk2"]} />
      </div>
    </div>
  );
}

// ---- left side ----

function PanelHeader({ title }: { title: string }) {
  return (
    <div className="h-[27px] bg-[#465a7e] flex items-center pl-[6px] text-[#d5dbe8] text-[14px] shrink-0">
      <span>{title}</span>
      <div className="ml-auto flex items-center">
        <svg viewBox="0 0 12 8" className="w-[11px] h-[7px] mr-[14px] mt-px"><path d="M0 0h12L6 8z" fill="#fff" /></svg>
        <svg viewBox="0 0 12 14" className="w-[12px] h-[14px] mr-[10px]"><path d="M3 1h6M4 1v7M8 1v7M1 8h10M6 8v6" stroke="#fff" strokeWidth="1.5" fill="none" /></svg>
        <svg viewBox="0 0 12 12" className="w-[12px] h-[12px] mr-[8px]"><path d="M1 1l10 10M11 1L1 11" stroke="#fff" strokeWidth="2" /></svg>
      </div>
    </div>
  );
}

const treeIcons: Record<string, ReactNode> = {
  net: <><path d="M2 3h20v3H2z" fill="#222" /><path d="M12 6v16" stroke="#222" strokeWidth="1.6" /><path d="M3 8h7v6H3zM14 8h7v6h-7z" fill="#6ec07a" stroke="#222" /><path d="M7 17h10v4H7z" fill="#3aa8c0" stroke="#222" /></>,
  cube: <><path d="M3 7l6-4h12v14l-4 4H3z" fill="#d8dce4" stroke="#223" strokeWidth="1.6" /><path d="M8 8h9v13H8z" fill="#7da8cc" stroke="#223" /><path d="M11 10v9M14 10v9" stroke="#223" /></>,
  plc: <><path d="M7 2h8v8H7z" fill="#78b8d8" stroke="#223" /><path d="M13 5h9v10h-9z" stroke="#2b6cc4" strokeWidth="1.4" /><path d="M2 11h15v5H2z" fill="#6a8ab0" stroke="#223" /><path d="M8 16h13v5H8z" fill="#d8d23a" stroke="#222" /></>,
  sys: <><path d="M1 1h10v7H1z" fill="#f0e0ff" stroke="#7a30f0" strokeWidth="1.4" /><path d="M4 3l2 3 2-3" stroke="#e8124a" /><circle cx="14" cy="14" r="8" fill="#5a78c0" stroke="#333" /><circle cx="11" cy="12" r="2" fill="#e84a4a" /><circle cx="17" cy="12" r="2" fill="#3ab05a" /><circle cx="14" cy="18" r="2" fill="#d8d23a" /></>,
  vari: <><path d="M1 1h11v8H1z" fill="#e4f8e4" stroke="#2aa84a" strokeWidth="1.4" /><path d="M4 3l2.5 4L9 3" stroke="#e8124a" /><path d="M4 9h18v10H4z" fill="#b8d8e8" stroke="#223" strokeWidth="1.4" /><path d="M6 19v3M10 19v3M14 19v3M18 19v3" stroke="#223" strokeWidth="1.5" /><path d="M10 17l8-6" stroke="#fff" strokeWidth="2" /></>,
  param: <><path d="M2 2h17v17H2z" fill="#dfe7f2" stroke="#223" strokeWidth="1.6" /><path d="M10 10h3v-4h2v6h3l3 2v6l-2 3h-6l-4-6z" fill="#fce8c8" stroke="#553" /></>,
  basic: <><path d="M1 6V1h5M18 1h5v5M1 18v5h5M23 18v5h-5" stroke="#2aa84a" strokeWidth="1.6" /><path d="M4 4h16v16H4z" fill="#c8ccd4" stroke="#222" strokeWidth="1.6" /><path d="M8 8h8v8H8z" fill="#eee" stroke="#222" /></>,
  io: <><path d="M1 6V1h5M18 1h5v5M1 18v5h5M23 18v5h-5" stroke="#2aa84a" strokeWidth="1.6" /><path d="M4 4h16v16H4z" fill="#c8d8e8" stroke="#222" strokeWidth="1.6" /><path d="M6 8l5 5M6 8h4M6 8v4" stroke="#e8243c" strokeWidth="1.6" /><path d="M13 8h5v9h-5z" fill="#fff" stroke="#222" /></>,
  internal: <><path d="M1 6V1h5M18 1h5v5M1 18v5h5M23 18v5h-5" stroke="#2aa84a" strokeWidth="1.6" /><path d="M4 4h16v16H4z" fill="#c8ccd4" stroke="#222" strokeWidth="1.6" /><path d="M8 8h8v8H8z" fill="#f0a0a8" stroke="#222" /></>,
  scan: <><path d="M7 3h9v3H7z" fill="#b0303c" stroke="#622" /><path d="M3 6h18v17H3z" fill="#a8d8d8" stroke="#223" strokeWidth="1.6" /><path d="M16 14a4 4 0 1 1-2-3M10 12H7l2-3" stroke="#1a7a3a" strokeWidth="1.6" /></>,
  prog: <><path d="M8 2h8v3H8z" fill="#b04040" /><path d="M3 4h18v18H3z" fill="#fbe4e4" stroke="#4a2a2a" strokeWidth="1.5" /><path d="M6 9h12M6 13h12M6 17h12M10 8v10M14 8v10" stroke="#6a4a4a" strokeDasharray="2 1" /></>,
};

const tree: { icon: string; text: string; pad: string; bold?: boolean; selected?: boolean }[] = [
  { icon: "net", text: "Automatic Bottle Inspection System", pad: "pl-[2px] ml-[22px]", selected: true },
  { icon: "net", text: "Network Configuration", pad: "pl-[45px]" },
  { icon: "cube", text: "Undefined Network", pad: "pl-[67px]" },
  { icon: "plc", text: "NewPLC [B0S0 Internal Cnet]", pad: "pl-[88px]" },
  { icon: "sys", text: "System Variable", pad: "pl-[45px]" },
  { icon: "cube", text: "NewPLC(XBC-DxxxE)-Offline", pad: "pl-[45px]", bold: true },
  { icon: "vari", text: "Variable/Comment", pad: "pl-[67px]" },
  { icon: "param", text: "Parameter", pad: "pl-[67px]" },
  { icon: "basic", text: "Basic Parameter", pad: "pl-[88px]" },
  { icon: "io", text: "I/O Parameter", pad: "pl-[88px]" },
  { icon: "internal", text: "Internal Parameter", pad: "pl-[88px]" },
  { icon: "scan", text: "Scan Program", pad: "pl-[67px]" },
  { icon: "prog", text: "NewProgram", pad: "pl-[88px]" },
];

function Tree() {
  return (
    <div className="relative h-[390px] bg-white pt-[2px] shrink-0">
      {tree.map((r) => (
        <div key={r.text} className={`relative flex items-center h-[21.25px] ${r.pad} ${r.selected ? "bg-[#d6dbe9]" : ""}`}>
          <S className="w-[20px] h-[20px] shrink-0">{treeIcons[r.icon]}</S>
          <span
            className={`ml-[5px] whitespace-nowrap font-['Liberation_Sans',Arial,sans-serif] ${
              r.bold ? "text-[14.5px] font-bold text-[#111]" : "text-[13.2px] text-[#3c4660]"
            }`}
          >
            {r.text}
          </span>
        </div>
      ))}
      {/* connector lines */}
      <svg viewBox="0 178 314 390" className="absolute inset-0 w-[314px] h-[390px] pointer-events-none" fill="none">
        <path
          d="M31.5 201v90M31.5 276.5h14M53.5 221v13M75.5 243v12h12M53.5 306v119M53.5 319h14M75.5 350v54M75.5 361h12M75.5 382h12M75.5 434v12h12M36 212h8M36 297h8M58 233.5h8M58 340h8M58 425h8M80 403.5h7"
          stroke="#a8a8a8"
        />
        <path d="M14 186v8h-8zM35 208v8h-8zM56 230v8h-8zM35 293v8h-8zM56 336v8h-8zM56 421v8h-8z" fill="#666" />
        <path d="M72 399l6 4.5-6 4.5z" fill="#fff" stroke="#888" />
      </svg>
    </div>
  );
}

function LeftPanel() {
  return (
    <div className="w-[314px] flex flex-col h-full shrink-0 pt-px">
      <PanelHeader title="Project" />
      <Tree />
      <div className="h-[29px] bg-[#465a7e] flex items-stretch text-[14px] shrink-0">
        <div className="w-[58px] bg-white text-[#2578b8] flex items-center justify-center pb-[3px]">Project</div>
        <div className="text-[#cfd6e4] flex items-center ml-[10px] pb-[3px]">View High-speed Link</div>
        <div className="text-[#cfd6e4] flex items-center ml-[17px] pb-[3px]">View P2P</div>
      </div>
      <div className="h-[8px] shrink-0" />
      <PanelHeader title="Function/FB" />
      <div className="h-[28px] bg-[#f0f0f0] flex items-center gap-[7px] pr-[3px] shrink-0">
        <div className="w-[257px] h-[24px] bg-[#f8f8f8] flex items-center px-[4px] text-[13px] text-[#8a8a8a]">
          <span>Most Recently Used</span>
          <svg viewBox="0 0 12 8" className="ml-auto mr-[6px] w-[12px] h-[8px]"><path d="M1 1l5 5 5-5" stroke="#b8b8b8" strokeWidth="1.2" fill="none" /></svg>
        </div>
        <div className="w-[47px] h-[24px] bg-[#f6f6f6] rounded-[2px] flex items-center justify-center text-[14px] text-[#9a9a9a]">Edit</div>
      </div>
      <div className="flex-1 bg-[#f0f0f0] border-t-[2px] border-[#a8a8a8] mt-[6px] pr-[4px]">
        <div className="h-[31px] bg-white flex items-center pl-[9px] text-[13px] text-[#222] font-['Liberation_Sans',Arial,sans-serif]">Function Name</div>
      </div>
    </div>
  );
}

// ---- ladder ----

const OX = 435;
const OY = 183;
const BLUE = "text-[#3a22ff]";
const BLACK = "text-[#222]";

const gridH = [252, 368, 486, 554, 672, 814, 883];
const gridV = [562, 688, 814, 940, 1066, 1192, 1318, 1444, 1570];

const labels: [number, number, string, string][] = [
  [497, 301, "START", BLUE], [497, 348, "P0000", BLACK],
  [623, 301, "STOP", BLUE], [623, 348, "P0001", BLACK],
  [1632, 281, "SYSTEM_O", BLUE], [1632, 301, "N", BLUE], [1632, 348, "M0000", BLACK],
  [497, 399, "SYSTEM_O", BLUE], [497, 419, "N", BLUE], [497, 466, "M0000", BLACK],
  [497, 583, "SYSTEM_O", BLUE], [497, 603, "N", BLUE], [497, 651, "M0000", BLACK],
  [623, 583, "PROXIMITY", BLUE], [623, 603, "_SENS", BLUE], [623, 651, "P0002", BLACK],
  [749, 583, "LS_ACTUA", BLUE], [749, 603, "TOR_1", BLUE], [749, 651, "P0005", BLACK],
  [876, 583, "TIMER_AC", BLUE], [876, 603, "TUATOR_1", BLUE], [876, 651, "T000", BLACK],
  [1632, 583, "ACTUATOR", BLUE], [1632, 603, "_1", BLUE], [1632, 651, "P0040", BLACK],
  [623, 727, "ACTUATOR", BLUE], [623, 747, "_1", BLUE], [623, 794, "P0040", BLACK],
  [1381, 749, "TON", BLACK], [1506, 739, "TIMER_AC", BLUE], [1506, 759, "TUATOR_1", BLUE], [1506, 794, "T000", BLACK],
  [1632, 749, "50", "text-[#ff22e0]"],
  [497, 914, "SYSTEM_O", BLUE], [623, 914, "LS_ACTUA", BLUE], [749, 914, "BOTTLE_O", BLUE], [876, 914, "BOTTLE_B", BLUE], [1631, 914, "CONVEYO", BLUE],
];

function Contact({ cx, y, nc }: { cx: number; y: number; nc?: boolean }) {
  return (
    <>
      <path d={`M${cx - 12.5} ${y - 11}v22M${cx + 12.5} ${y - 11}v22`} stroke="#333" strokeWidth="1.5" />
      {nc && <path d={`M${cx - 5} ${y + 10}L${cx + 6} ${y - 9}`} stroke="#333" strokeWidth="1.3" />}
    </>
  );
}

function Coil({ cx, y }: { cx: number; y: number }) {
  return <path d={`M${cx - 9} ${y - 9}L${cx - 14} ${y}L${cx - 9} ${y + 9}M${cx + 9} ${y - 9}L${cx + 14} ${y}L${cx + 9} ${y + 9}`} stroke="#333" strokeWidth="1.2" fill="none" />;
}

function Ladder() {
  return (
    <div className="relative flex-1 h-full bg-white overflow-hidden font-['Liberation_Sans',Arial,sans-serif] text-[17px] leading-none">
      <svg viewBox={`${OX} ${OY} 1416 742`} className="absolute inset-0 w-[1416px] h-[742px]" fill="none">
        {gridH.map((y) => (
          <path key={y} d={`M${OX} ${y}H1692`} stroke="#e4e4fa" strokeDasharray="4 4" />
        ))}
        <path d={`M${OX} 184H1692`} stroke="#e4e4fa" strokeDasharray="4 4" />
        {gridV.map((x) => (
          <path key={x} d={`M${x} ${OY}V925`} stroke="#e4e4fa" strokeDasharray="4 4" />
        ))}
        <path d="M1696 183V925" stroke="#111" strokeWidth="2" />
        <g stroke="#333" strokeWidth="1.5">
          <path d="M435 325H484.5M512.5 325H610.5M638.5 325H1618M1646 325H1696" />
          <path d="M435 443H484.5M512.5 443H562V325" />
          <path d="M435 629H484.5M512.5 629H610.5M638.5 629H736.5M764.5 629H863.5M891.5 629H1618M1646 629H1696" />
          <path d="M562 629V772H610.5M636.5 772H1316M1319 772H1329M688 629V772M1683 772H1696" />
        </g>
        <Contact cx={498.5} y={325} />
        <Contact cx={624.5} y={325} nc />
        <Contact cx={498.5} y={443} />
        <Contact cx={498.5} y={629} />
        <Contact cx={624.5} y={629} />
        <Contact cx={750.5} y={629} nc />
        <Contact cx={877.5} y={629} />
        <Contact cx={624.5} y={772} />
        <Coil cx={1632} y={325} />
        <Coil cx={1632} y={629} />
        <rect x="1331" y="721" width="354" height="60" fill="#b8b8b8" />
        <rect x="1329.5" y="719.5" width="353" height="59" fill="#fff" stroke="#222" strokeWidth="1.5" />
      </svg>
      {labels.map(([x, y, t, c], i) => (
        <span
          key={i}
          className={`absolute -translate-x-1/2 -translate-y-1/2 whitespace-nowrap ${c}`}
          style={{ left: x - OX, top: y - OY }}
        >
          {t}
        </span>
      ))}
      <span className="absolute left-0 top-[26px] whitespace-nowrap text-[#1f8f2a]">START_SYSTEM</span>
      <span className="absolute left-0 top-[328px] whitespace-nowrap text-[#1f8f2a] [word-spacing:-1.5px]">ACTUATOR 1 ON</span>
      <span className="absolute left-0 top-[657px] whitespace-nowrap text-[#1f8f2a] [word-spacing:-1.5px]">CONVEYOR A ON</span>
    </div>
  );
}

const margin: { h: string; comment?: boolean; num?: string }[] = [
  { h: "h-[69px]", comment: true },
  { h: "h-[116px]", num: "1" },
  { h: "h-[118px]" },
  { h: "h-[68px]", comment: true },
  { h: "h-[118px]", num: "6" },
  { h: "h-[142px]" },
  { h: "h-[69px]", comment: true },
  { h: "h-[42px]" },
];

function Margin() {
  return (
    <div className="w-[103px] h-full flex flex-col shrink-0 overflow-hidden bg-[#f0f0f0] font-['Liberation_Sans',Arial,sans-serif] text-[16.5px] leading-none">
      {margin.map((m, i) => (
        <div key={i} className={`${m.h} shrink-0 border-b-2 border-[#a0a0a0] flex ${m.comment ? "items-center justify-center" : "items-end justify-end pr-[8px]"}`}>
          {m.comment && <span className="text-[#1f8f2a]">Comment</span>}
          {m.num && <span className="text-[#3a22ff]">{m.num}</span>}
        </div>
      ))}
    </div>
  );
}

function Editor() {
  return (
    <div className="flex-1 bg-white px-[6px] pt-[5px] pb-[6px] h-full flex flex-col min-w-0">
      <div className="flex-1 bg-[#f0f0f0] border-t-2 border-l-2 border-[#8f8f8f] flex flex-col min-h-0">
        <div className="h-[742px] flex shrink-0">
          <Margin />
          <div className="w-[2px] bg-black shrink-0" />
          <Ladder />
          <div className="w-[22px] h-full shrink-0 flex flex-col items-center">
            <div className="w-[22px] h-[9px] border-r-2 border-b-2 border-[#9a9a9a] bg-[#f4f4f4]" />
            <div className="w-[2px] h-[95px] bg-[#8f8f8f] mt-[21px]" />
          </div>
        </div>
        <div className="flex-1 flex items-center pl-[21px] relative">
          <div className="w-[1373px] h-[3px] bg-[#8a8a8a]" />
          <svg viewBox="0 0 12 12" className="absolute right-[4px] bottom-[1px] w-[12px] h-[12px]">
            <path d="M9 2h2v2H9zM6 5h2v2H6zM9 5h2v2H9zM3 8h2v2H3zM6 8h2v2H6zM9 8h2v2H9z" fill="#a8a8a8" />
          </svg>
        </div>
      </div>
    </div>
  );
}

function TabClose() {
  return (
    <svg viewBox="0 0 10 10" className="w-[10px] h-[10px] shrink-0">
      <path d="M1 1l8 8M9 1L1 9" stroke="#666" strokeWidth="1.8" />
    </svg>
  );
}

function Center() {
  return (
    <div className="w-[1559px] h-full flex flex-col shrink-0">
      <div className="h-[26px] flex items-end relative shrink-0 pl-px">
        <div className="w-[158px] h-[23px] bg-white [clip-path:polygon(20px_0,100%_0,100%_100%,0_100%)] flex items-center pl-[40px] pr-[7px] justify-between text-[13.2px] font-bold text-[#111]">
          <span>NewProgram</span>
          <TabClose />
        </div>
        <div className="w-[144px] h-[23px] ml-px bg-[#d6dce9] flex items-center pl-[24px] pr-[6px] justify-between text-[13px] text-[#2f3a50]">
          <span>I/O Parameter</span>
          <TabClose />
        </div>
        <div className="w-[177px] h-[23px] ml-px bg-[#d6dce9] flex items-center pl-[25px] pr-[6px] justify-between text-[13px] text-[#2f3a50]">
          <span>Variable/Comment</span>
          <TabClose />
        </div>
        <div className="ml-[5px] self-center mt-[3px] font-['Liberation_Sans',Arial,sans-serif] font-bold text-white text-[25px] tracking-[1.4px] leading-none whitespace-nowrap">
          InstrumentationTools.com
        </div>
        <svg viewBox="0 0 12 8" className="absolute right-[6px] top-[11px] w-[11px] h-[7px]"><path d="M0 0h12L6 8z" fill="#fff" /></svg>
      </div>
      <div className="flex-1 min-h-0">
        <Editor />
      </div>
    </div>
  );
}

function RightDock() {
  return (
    <div className="flex-1 h-full relative">
      <div className="absolute left-[8px] top-[11px] [writing-mode:vertical-rl] text-[15.3px] leading-[16px] text-[#d5dbe8] whitespace-nowrap font-['Liberation_Sans',Arial,sans-serif] flex gap-[9px]">
        <span>System catalog</span>
        <span>EDS information</span>
      </div>
      <div className="absolute right-0 top-[9px] flex flex-col gap-[5px]">
        <div className="w-[7px] h-[107px] bg-[#465a7e]" />
        <div className="w-[7px] h-[114px] bg-[#465a7e]" />
      </div>
    </div>
  );
}

const menu = ["PROJECT", "EDIT", "FIND/REPLACE", "VIEW", "ONLINE", "MONITOR", "DEBUG", "TOOLS", "WINDOW", "HELP"];

const bottomA = [
  ["Find 2", "w-[42px]"],
  ["Communication", "w-[103px]"],
  ["Cross Reference", "w-[104px]"],
  ["Used Device", "w-[80px]"],
  ["Duplicate Coil", "w-[92px]"],
];
const bottomB = [
  ["Monitor 1", "w-[66px]"],
  ["Monitor 2", "w-[66px]"],
  ["Monitor 4", "w-[66px]"],
];

function BottomTab({ t, w }: { t: string; w: string }) {
  return (
    <div className={`${w} flex flex-col items-center shrink-0`}>
      <span className="h-[29px] flex items-center text-[13.5px] text-[#cfd6e4] whitespace-nowrap pt-[3px]">{t}</span>
      <div className="w-full h-[6px] bg-[#465a7e]" />
    </div>
  );
}

export default function App() {
  return (
    <div className="w-[1920px] h-[988px] overflow-hidden flex flex-col bg-[#2a3a57] font-['Noto_Sans',sans-serif]">
      <div className="bg-[#d6dcea] shrink-0 h-[151px] flex flex-col">
        <div className="h-[30px] border-b-2 border-[#c3c8d2] flex items-center shrink-0 relative">
          <svg viewBox="0 0 20 20" className="w-[20px] h-[20px] ml-[5px] mr-[6px]">
            <circle cx="9" cy="9" r="8" fill="#2f8fd8" />
            <circle cx="7" cy="6" r="3" fill="#a8def4" />
            <path d="M11 12h6v6h-6z" fill="#3ab04a" />
          </svg>
          <span className="text-[13.9px] text-[#7d8597]">Automatic Bottle Inspection System - XG5000</span>
          <div className="ml-auto flex items-center gap-[30px] pr-[18px]">
            <div className="w-[8px] h-[2px] bg-[#b4b8c2] mt-[5px]" />
            <svg viewBox="0 0 12 12" className="w-[11px] h-[12px]"><path d="M4 1h7v7H9M1 4h7v7H1z" stroke="#b4b8c2" strokeWidth="1.4" fill="none" /></svg>
            <svg viewBox="0 0 10 10" className="w-[10px] h-[10px]"><path d="M1 1l8 8M9 1L1 9" stroke="#b4b8c2" strokeWidth="1.5" /></svg>
          </div>
        </div>
        <div className="h-[26px] flex items-center shrink-0">
          <div className="w-[6px] h-[22px] ml-[3px] mr-[12px] bg-[radial-gradient(#8f939b_1px,transparent_1px)] bg-[length:3px_3px]" />
          <div className="flex gap-[19px] text-[13.5px] text-[#2f3546]">
            {menu.map((m) => (
              <span key={m}>{m}</span>
            ))}
          </div>
        </div>
        <Toolbars />
      </div>
      <div className="h-[802px] flex shrink-0">
        <LeftPanel />
        <div className="w-[8px] shrink-0" />
        <Center />
        <RightDock />
      </div>
      <div className="flex-1 flex pl-[9px]">
        <div className="flex gap-[7px]">
          {bottomA.map(([t, w]) => (
            <BottomTab key={t} t={t} w={w} />
          ))}
        </div>
        <div className="flex gap-[6px] ml-[26px]">
          {bottomB.map(([t, w]) => (
            <BottomTab key={t} t={t} w={w} />
          ))}
        </div>
      </div>
    </div>
  );
}
